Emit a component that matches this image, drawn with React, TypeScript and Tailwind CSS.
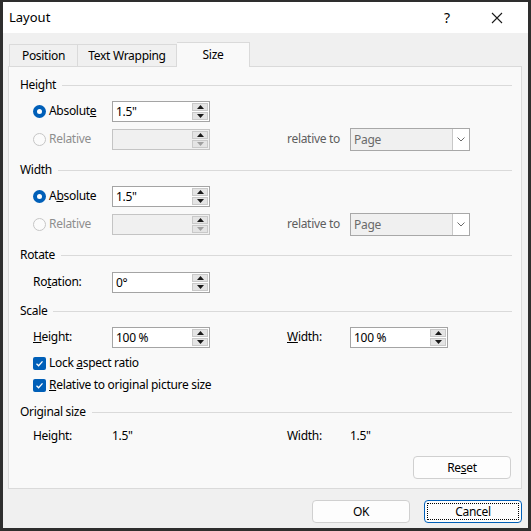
import React from 'react';

const FONT = 'font-["Segoe_UI","Noto_Sans",sans-serif]';

const Header = ({ t }: { t: string }) => (
  <div className="flex items-center h-[20px] pl-[11px] pr-[9px]">
    <span className="text-black">{t}</span>
    <div className="flex-1 h-px bg-[#dadada] ml-[6px]" />
  </div>
);

const Radio = ({ on, off }: { on?: boolean; off?: boolean }) =>
  on ? (
    <span className="w-[13px] h-[13px] rounded-full bg-[#005fb8] flex items-center justify-center shrink-0">
      <span className="w-[5px] h-[5px] rounded-full bg-white" />
    </span>
  ) : (
    <span
      className={`w-[13px] h-[13px] rounded-full border shrink-0 ${off ? 'border-[#c6c6c6] bg-[#fbfbfb]' : 'border-[#8a8a8a] bg-white'}`}
    />
  );

const Check = () => (
  <span className="w-[13px] h-[13px] rounded-[2px] bg-[#005fb8] flex items-center justify-center shrink-0">
    <svg width="9" height="9" viewBox="0 0 9 9">
      <path d="M1.5 4.8 L3.6 6.8 L7.5 2.4" fill="none" stroke="white" strokeWidth="1.3" />
    </svg>
  </span>
);

const Arrow = ({ up, dim }: { up?: boolean; dim?: boolean }) => (
  <svg width="7" height="4" viewBox="0 0 7 4">
    <polygon points={up ? '0,4 7,4 3.5,0' : '0,0 7,0 3.5,4'} fill={dim ? '#a0a0a0' : '#1a1a1a'} />
  </svg>
);

const Spin = ({ v, off }: { v?: string; off?: boolean }) => (
  <div
    className={`w-[98px] h-[21px] border flex items-stretch ${off ? 'border-[#c4c4c4] bg-[#f0f0f0]' : 'border-[#a4a4a4] bg-white'}`}
  >
    <span className="flex-1 pl-[3px] leading-[19px] text-black">{v}</span>
    <div className="w-[17px] flex flex-col gap-px py-px pr-px">
      <div className="flex-1 flex items-center justify-center bg-[#e4e4e4] border border-[#c9c9c9]">
        <Arrow up />
      </div>
      <div className="flex-1 flex items-center justify-center bg-[#e4e4e4] border border-[#c9c9c9]">
        <Arrow dim={off} />
      </div>
    </div>
  </div>
);

const Select = () => (
  <div className="w-[120px] h-[23px] border border-[#a8a8a8] bg-[#f0f0f0] flex items-stretch">
    <span className="flex-1 pl-[3px] leading-[21px] text-[#6a6a6a]">Page</span>
    <div className="w-[17px] bg-white border-l border-[#c8c8c8] flex items-center justify-center">
      <svg width="8" height="5" viewBox="0 0 8 5">
        <path d="M0.5 0.5 L4 4 L7.5 0.5" fill="none" stroke="#6a6a6a" strokeWidth="1" />
      </svg>
    </div>
  </div>
);

const Btn = ({ children, focus }: { children: React.ReactNode; focus?: boolean }) => (
  <button
    type="button"
    className={`w-[98px] h-[23px] rounded-[4px] border bg-[#fdfdfd] text-black flex items-center justify-center p-[2px] ${focus ? 'border-[#005fb8]' : 'border-[#d0d0d0]'}`}
  >
    <span className={`w-full h-full flex items-center justify-center ${focus ? 'border border-dotted border-black' : ''}`}>
      {children}
    </span>
  </button>
);

const SizeRows = ({ ul }: { ul: 'e' | 'b' }) => (
  <>
    <div className="flex items-center h-[28px] mt-[2px] pl-[24px]">
      <div className="w-[79px] flex items-center gap-[3px]">
        <Radio on />
        <span className="text-black">
          {ul === 'e' ? (
            <>Absolut<u>e</u></>
          ) : (
            <>A<u>b</u>solute</>
          )}
        </span>
      </div>
      <Spin v={'1.5"'} />
    </div>
    <div className="flex items-center h-[28px] pl-[24px]">
      <div className="w-[79px] flex items-center gap-[3px]">
        <Radio off />
        <span className="text-[#8e8e8e]">Relative</span>
      </div>
      <Spin off />
      <span className="w-[77px]" />
      <span className="w-[63px] text-[#5e5e5e]">relative to</span>
      <Select />
    </div>
  </>
);

export default function App() {
  return (
    <div
      className={`${FONT} text-[12px] tracking-[-0.3px] w-[531px] h-[531px] border-[3px] border-t-2 border-[#2e2e2e] bg-[#f0f0f0] flex flex-col overflow-hidden`}
    >
      {/* title bar */}
      <div className="h-[31px] bg-white flex items-center pl-[6px] shrink-0">
        <span className="text-[13px] tracking-normal text-black flex-1">Layout</span>
        <span className="w-[46px] mr-[4px] text-center text-[14px] text-black">?</span>
        <span className="w-[46px] mr-[8px] flex items-center justify-center">
          <svg width="12" height="12" viewBox="0 0 12 12">
            <path d="M1 1 L11 11 M11 1 L1 11" stroke="#1a1a1a" strokeWidth="1.1" />
          </svg>
        </span>
      </div>

      {/* tabs */}
      <div className="flex items-end pl-[6px] mt-[8px] h-[25px] shrink-0">
        <div className="w-[69px] h-[22px] border border-b-0 border-[#dadada] bg-[#f0f0f0] flex items-center justify-center text-black">
          Position
        </div>
        <div className="w-[99px] h-[22px] border border-b-0 border-l-0 border-[#dadada] bg-[#f0f0f0] flex items-center justify-center text-black">
          Text Wrapping
        </div>
        <div className="relative z-10 -mb-px w-[73px] h-[25px] border border-b-0 border-l-0 border-[#dadada] bg-[#f9f9f9] flex items-center justify-center text-black">
          Size
        </div>
      </div>

      {/* panel */}
      <div className="ml-[5px] w-[514px] border border-[#dadada] bg-[#f9f9f9] flex flex-col pt-[8px] pb-[9px] shrink-0">
        <Header t="Height" />
        <SizeRows ul="e" />

        <div className="mt-[7px]">
          <Header t="Width" />
        </div>
        <SizeRows ul="b" />

        <div className="mt-[7px]">
          <Header t="Rotate" />
        </div>
        <div className="flex items-center h-[28px] mt-[3px] pl-[24px]">
          <span className="w-[79px] text-black">
            Ro<u>t</u>ation:
          </span>
          <Spin v="0°" />
        </div>

        <div className="mt-[5px]">
          <Header t="Scale" />
        </div>
        <div className="flex items-center h-[28px] mt-[2px] pl-[24px]">
          <span className="w-[79px] text-black">
            <u>H</u>eight:
          </span>
          <Spin v="100 %" />
          <span className="w-[77px]" />
          <span className="w-[63px] text-black">
            <u>W</u>idth:
          </span>
          <Spin v="100 %" />
        </div>
        <div className="flex items-center gap-[3px] h-[22px] mt-[1px] pl-[24px] text-black">
          <Check />
          <span>
            Lock <u>a</u>spect ratio
          </span>
        </div>
        <div className="flex items-center gap-[3px] h-[22px] pl-[24px] text-black">
          <Check />
          <span>
            <u>R</u>elative to original picture size
          </span>
        </div>

        <div className="mt-[6px]">
          <Header t="Original size" />
        </div>
        <div className="flex items-center h-[28px] pl-[24px] text-black">
          <span className="w-[79px]">Height:</span>
          <span className="w-[98px]">1.5"</span>
          <span className="w-[77px]" />
          <span className="w-[63px]">Width:</span>
          <span>1.5"</span>
        </div>

        <div className="flex justify-end pr-[10px] mt-[6px]">
          <Btn>
            Re<u>s</u>et
          </Btn>
        </div>
      </div>

      {/* dialog buttons */}
      <div className="flex justify-end gap-[14px] pr-[6px] mt-[11px]">
        <Btn>OK</Btn>
        <Btn focus>Cancel</Btn>
      </div>
    </div>
  );
}
